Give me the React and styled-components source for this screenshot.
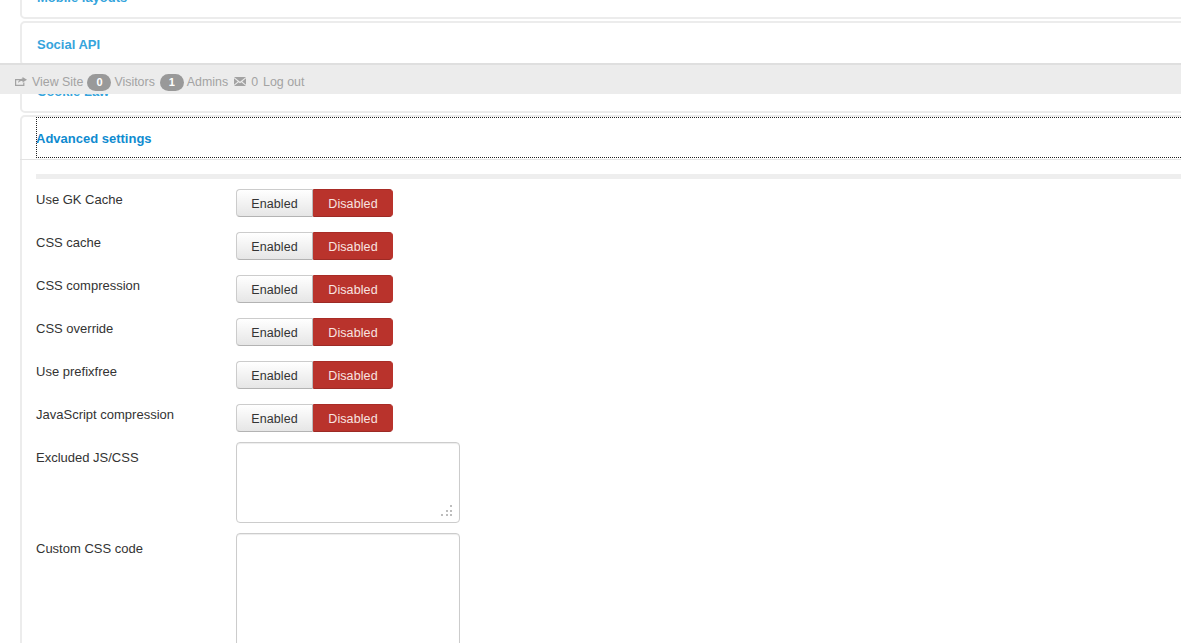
import styled, { createGlobalStyle } from 'styled-components';

const Global = createGlobalStyle`
html, body {
  margin: 0;
  height: 643px;
  overflow: hidden;
  background: #fff;
}
body {
  font-family: "Liberation Sans", Arial, sans-serif;
  color: #333;
}
`

const Page = styled.div`
position: relative;
height: 643px;
overflow: hidden;
`

const Accordion = styled.div`
display: flex;
flex-direction: column;
gap: 2px;
margin: -26px -40px 0 20px;
`

const Panel = styled.section`
border: 2px solid #ececec;
border-radius: 5px;
background: #fff;
`

const Title = styled.h3`
box-sizing: border-box;
margin: 0;
height: 41px;
padding: 2px 15px 0;
display: flex;
align-items: center;
font-size: 13px;
font-weight: bold;
color: ${p => p.$open ? '#0f8bd0' : '#35a4dc'};
`

const OpenHeader = styled.div`
height: 42px;
margin-left: -2px;
padding-left: 16px;
border-bottom: 1px solid #e3e3e3;
`

const OpenTitle = styled(Title)`
padding: 2px 0 0;
outline: 1px dotted #222;
outline-offset: -1px;
`

const Body = styled.div`
padding: 14px 0 0 14px;
`

const Rule = styled.div`
height: 5px;
background: #eee;
margin-bottom: 5px;
`

const Row = styled.div`
display: grid;
grid-template-columns: 200px auto;
justify-content: start;
height: ${p => p.$height || 43}px;
`

const Label = styled.label`
padding-top: 6px;
font-size: 13px;
color: #333;
line-height: 20px;
`

const Toggle = styled.div`
display: flex;
height: 28px;
margin-top: 5px;
`

const ToggleBtn = styled.div`
box-sizing: border-box;
display: flex;
align-items: center;
justify-content: center;
padding-top: 1px;
font-size: 12.5px;
letter-spacing: 0.1px;
${p => p.$active ? `
  width: 80px;
  color: #f8e4e1;
  background: #b9332c;
  border: 1px solid #b9332c;
  border-top-color: #a82c26;
  border-bottom-color: #9c2a25;
  border-radius: 0 4px 4px 0;
` : `
  width: 77px;
  color: #333;
  background: linear-gradient(#fff, #e6e6e6);
  border: 1px solid #ccc;
  border-bottom-color: #b3b3b3;
  border-right-color: #bbb;
  border-radius: 4px 0 0 4px;
`}
`

const AreaBox = styled.div`
position: relative;
width: 224px;
height: ${p => p.$height}px;
`

const Area = styled.textarea`
box-sizing: border-box;
display: block;
width: 100%;
height: 100%;
padding: 4px 6px;
margin: 0;
resize: none;
background: #fff;
border: 1px solid #ccc;
border-radius: 4px;
box-shadow: inset 0 1px 1px rgba(0,0,0,0.075);
`

const GripIcon = styled.svg`
position: absolute;
right: 8px;
bottom: 7px;
`

const AdminBar = styled.nav`
position: absolute;
top: 63px;
left: 0;
right: 0;
height: 24px;
padding: 5px 0 0 15px;
display: flex;
align-items: center;
background: #ececec;
border-top: 2px solid #dfdfdf;
font-size: 12.4px;
color: #a3a3a3;
`

const BarText = styled.span`
margin-left: ${p => p.$gap || 0}px;
`

const Badge = styled.span`
box-sizing: border-box;
width: 24px;
height: 17px;
margin: 0 3px 0 ${p => p.$gap}px;
border-radius: 9px;
background: #999;
color: #fff;
font-size: 11px;
font-weight: bold;
line-height: 17px;
text-align: center;
`

const BarIcon = styled.svg`
flex: none;
margin: -2px 0 0 ${p => p.$gap || 0}px;
fill: #a3a3a3;
`

const Grip = () => (
  <GripIcon width="12" height="12" viewBox="0 0 12 12" fill="#bdbdbd">
    <rect x="10" y="1" width="2" height="2" />
    <rect x="6" y="6" width="2" height="2" />
    <rect x="10" y="6" width="2" height="2" />
    <rect x="1" y="10" width="2" height="2" />
    <rect x="6" y="10" width="2" height="2" />
    <rect x="10" y="10" width="2" height="2" />
  </GripIcon>
)

const ShareIcon = () => (
  <BarIcon width="12" height="9" viewBox="0 0 12 9">
    <path d="M0 2h6v1.200H1.200v4.600h7V5.500h1.200V9H0z" />
    <path d="M7.500 0 12 2.700 7.500 5.400V3.900C5.500 3.900 4 4.500 3 6 3.300 3.600 5 1.900 7.500 1.600z" />
  </BarIcon>
)

const MailIcon = () => (
  <BarIcon $gap={6} width="12" height="9" viewBox="0 0 12 9">
    <path d="M0 0h12L6 4.800z" />
    <path d="M0 1.300v6.400L3.800 4.400z" />
    <path d="M12 1.300v6.400L8.200 4.400z" />
    <path d="M0 9h12L7.400 5.200 6 6.300 4.600 5.200z" />
  </BarIcon>
)

const switches = ['Use GK Cache', 'CSS cache', 'CSS compression', 'CSS override', 'Use prefixfree', 'JavaScript compression']

export default function App() {
  return (
    <Page>
      <Global />
      <Accordion>
        <Panel><Title>Mobile layouts</Title></Panel>
        <Panel><Title>Social API</Title></Panel>
        <Panel><Title>Cookie Law</Title></Panel>
        <Panel>
          <OpenHeader><OpenTitle $open>Advanced settings</OpenTitle></OpenHeader>
          <Body>
            <Rule />
            {switches.map(name => (
              <Row key={name}>
                <Label>{name}</Label>
                <Toggle>
                  <ToggleBtn>Enabled</ToggleBtn>
                  <ToggleBtn $active>Disabled</ToggleBtn>
                </Toggle>
              </Row>
            ))}
            <Row $height={91}>
              <Label>Excluded JS/CSS</Label>
              <AreaBox $height={81}>
                <Area />
                <Grip />
              </AreaBox>
            </Row>
            <Row $height={200}>
              <Label>Custom CSS code</Label>
              <AreaBox $height={190}>
                <Area />
                <Grip />
              </AreaBox>
            </Row>
          </Body>
        </Panel>
      </Accordion>
      <AdminBar>
        <ShareIcon />
        <BarText $gap={5}>View Site</BarText>
        <Badge $gap={4}>0</Badge>
        <BarText>Visitors</BarText>
        <Badge $gap={5}>1</Badge>
        <BarText>Admins</BarText>
        <MailIcon />
        <BarText $gap={5}>0</BarText>
        <BarText $gap={5}>Log out</BarText>
      </AdminBar>
    </Page>
  )
}
